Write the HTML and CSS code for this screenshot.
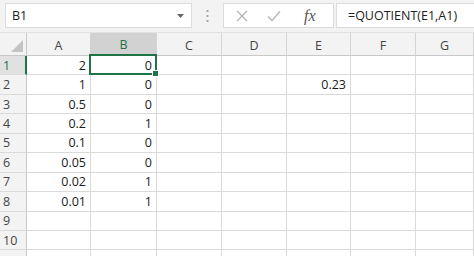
FILE: index.html
```html
<!DOCTYPE html>
<html lang="en">
  <head>
    <meta charset="UTF-8" />
    <title>Sheet</title>
    <link rel="stylesheet" href="styles.css">
  </head>
  <body>
    <div class="bar">
      <div class="namebox">
        <span>B1</span>
        <svg width="7" height="4" viewBox="0 0 7 4"><path d="M0 0h7L3.5 4z" fill="#666" /></svg>
      </div>
      <div class="grip">
        <svg width="3" height="14" viewBox="0 0 3 14">
          <rect x="0.5" y="1" width="2" height="2" fill="#a6a6a6" />
          <rect x="0.5" y="6" width="2" height="2" fill="#a6a6a6" />
          <rect x="0.5" y="11" width="2" height="2" fill="#a6a6a6" />
        </svg>
      </div>
      <div class="tools">
        <svg width="12" height="12" viewBox="0 0 12 12"><path d="M1 1l10 10M11 1L1 11" stroke="#b5b5b5" stroke-width="1.3" fill="none" /></svg>
        <svg width="14" height="12" viewBox="0 0 14 12"><path d="M1 6.5l4 4L13 1.5" stroke="#b5b5b5" stroke-width="1.3" fill="none" /></svg>
        <span class="fx">fx</span>
      </div>
      <div class="formula">=QUOTIENT(E1,A1)</div>
    </div>

    <div class="sheet">
      <div class="corner"><span class="tri"></span></div>
      <div class="colhead">A</div>
      <div class="colhead sel">B</div>
      <div class="colhead">C</div>
      <div class="colhead">D</div>
      <div class="colhead">E</div>
      <div class="colhead">F</div>
      <div class="colhead">G</div>

      <div class="rowhead sel">1</div><div class="cell">2</div><div class="cell active">0</div><div class="cell"></div><div class="cell"></div><div class="cell"></div><div class="cell"></div><div class="cell"></div>
      <div class="rowhead">2</div><div class="cell">1</div><div class="cell">0</div><div class="cell"></div><div class="cell"></div><div class="cell">0.23</div><div class="cell"></div><div class="cell"></div>
      <div class="rowhead">3</div><div class="cell">0.5</div><div class="cell">0</div><div class="cell"></div><div class="cell"></div><div class="cell"></div><div class="cell"></div><div class="cell"></div>
      <div class="rowhead">4</div><div class="cell">0.2</div><div class="cell">1</div><div class="cell"></div><div class="cell"></div><div class="cell"></div><div class="cell"></div><div class="cell"></div>
      <div class="rowhead">5</div><div class="cell">0.1</div><div class="cell">0</div><div class="cell"></div><div class="cell"></div><div class="cell"></div><div class="cell"></div><div class="cell"></div>
      <div class="rowhead">6</div><div class="cell">0.05</div><div class="cell">0</div><div class="cell"></div><div class="cell"></div><div class="cell"></div><div class="cell"></div><div class="cell"></div>
      <div class="rowhead">7</div><div class="cell">0.02</div><div class="cell">1</div><div class="cell"></div><div class="cell"></div><div class="cell"></div><div class="cell"></div><div class="cell"></div>
      <div class="rowhead">8</div><div class="cell">0.01</div><div class="cell">1</div><div class="cell"></div><div class="cell"></div><div class="cell"></div><div class="cell"></div><div class="cell"></div>
      <div class="rowhead">9</div><div class="cell"></div><div class="cell"></div><div class="cell"></div><div class="cell"></div><div class="cell"></div><div class="cell"></div><div class="cell"></div>
      <div class="rowhead">10</div><div class="cell"></div><div class="cell"></div><div class="cell"></div><div class="cell"></div><div class="cell"></div><div class="cell"></div><div class="cell"></div>
      <div class="rowhead"></div><div class="cell"></div><div class="cell"></div><div class="cell"></div><div class="cell"></div><div class="cell"></div><div class="cell"></div><div class="cell"></div>
    </div>
  </body>
</html>
```

FILE: styles.css
```css
* {
  box-sizing: border-box;
}

body {
  margin: 0;
  width: 474px;
  height: 256px;
  overflow: hidden;
  font-family: "Open Sans", sans-serif;
  font-size: 12.5px;
  color: #222;
  background: #fff;
}

.bar {
  display: flex;
  align-items: center;
  height: 33px;
  padding: 3px 0 4px 5px;
  background: #f3f3f3;
  border-bottom: 1px solid #e2e2e2;
}

.namebox,
.tools,
.formula {
  height: 100%;
  background: #fff;
  border: 1px solid #dcdcdc;
}

.namebox {
  display: flex;
  align-items: center;
  justify-content: space-between;
  width: 187px;
  padding: 0 7px 0 6px;
}

.grip {
  display: flex;
  justify-content: center;
  width: 31px;
}

.tools {
  display: flex;
  align-items: center;
  width: 111px;
  padding-left: 12px;
  gap: 19px;
}

.fx {
  margin-left: 4px;
  font-family: "Liberation Serif", serif;
  font-style: italic;
  font-size: 16px;
  color: #555;
}

.formula {
  flex: 1;
  display: flex;
  align-items: center;
  margin-left: 2px;
  padding-left: 11px;
  border-right: none;
}

.sheet {
  display: grid;
  grid-template-columns: 27px 64px 66px 65px 65px 64px 65px 58px;
  grid-template-rows: 23px repeat(11, 19.45px);
}

.corner,
.colhead,
.rowhead {
  background: #f3f3f3;
  color: #444;
  border-right: 1px solid #d4d4d4;
  border-bottom: 1px solid #c8c8c8;
}

.corner {
  position: relative;
  border-right-color: #c8c8c8;
}

.tri {
  position: absolute;
  right: 3px;
  bottom: 3px;
  border-style: solid;
  border-width: 0 0 12px 12px;
  border-color: transparent transparent #c4c4c4 transparent;
}

.colhead {
  display: flex;
  align-items: center;
  justify-content: center;
  padding-top: 2px;
}

.rowhead {
  display: flex;
  align-items: center;
  padding-left: 3px;
  border-right-color: #c8c8c8;
  border-bottom-color: #dadada;
}

.colhead.sel {
  background: #d2d2d2;
  color: #217346;
  border-bottom: 2px solid #217346;
}

.rowhead.sel {
  background: #e1e1e1;
  color: #217346;
  border-right: 2px solid #217346;
}

.cell {
  display: flex;
  align-items: center;
  justify-content: flex-end;
  padding-right: 4px;
  border-right: 1px solid #dadada;
  border-bottom: 1px solid #dadada;
  color: #1a1a1a;
}

.cell.active {
  position: relative;
}

.cell.active::before {
  content: "";
  position: absolute;
  inset: -2px -1px -1px -2px;
  border: 2px solid #217346;
}

.cell.active::after {
  content: "";
  position: absolute;
  right: -3px;
  bottom: -3px;
  width: 5px;
  height: 5px;
  background: #217346;
  border: 1px solid #fff;
}
```
